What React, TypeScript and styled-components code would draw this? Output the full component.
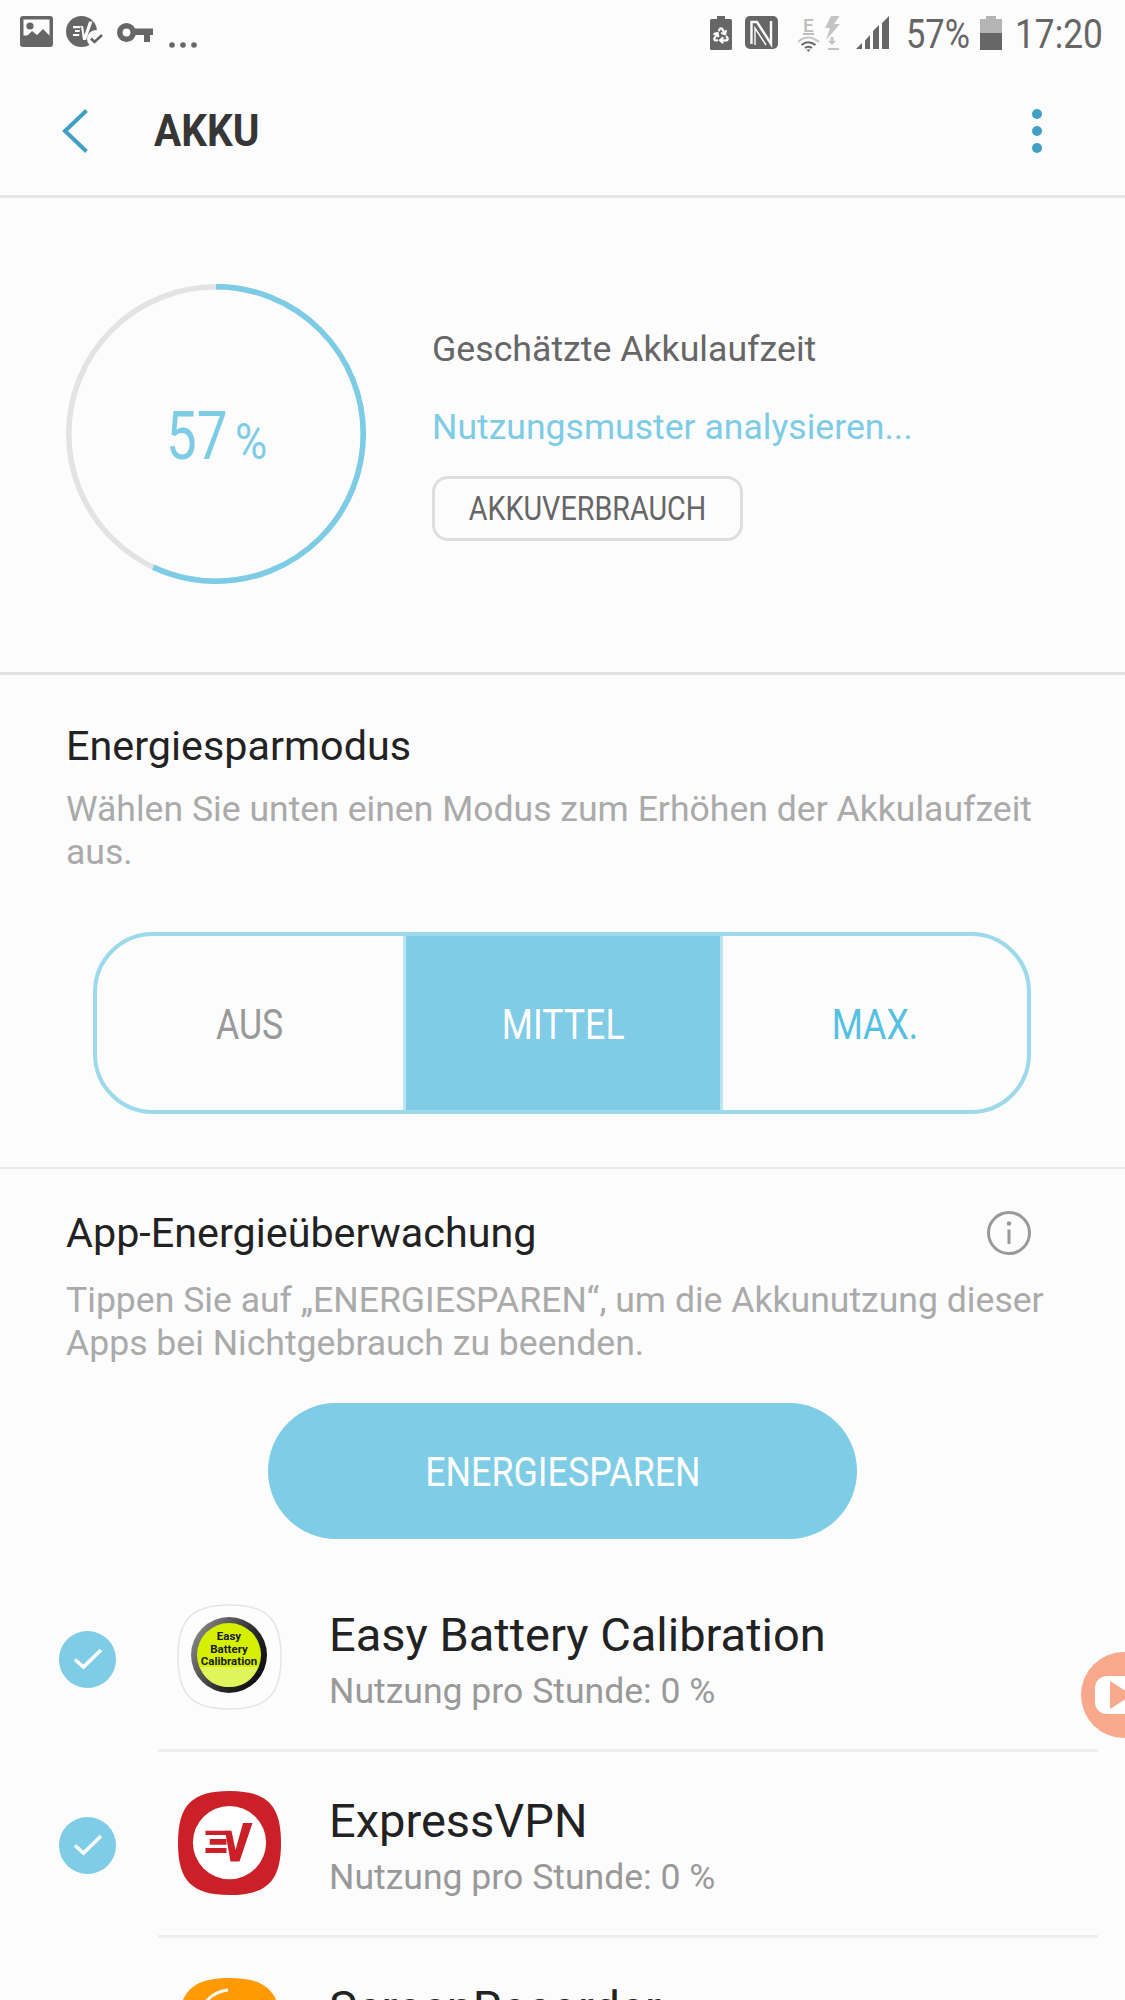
import React from "react";
import styled, { createGlobalStyle } from "styled-components";
import { Recycle } from "lucide-react";

const GlobalStyle = createGlobalStyle`
    html, body {
        margin: 0;
        padding: 0;
        background: #fcfcfc;
    }
    * {
        box-sizing: border-box;
    }
    svg {
        display: block;
    }
`;

const Page = styled.div`
    position: relative;
    width: 1125px;
    height: 2000px;
    overflow: hidden;
    background: #fcfcfc;
    font-family: Roboto, "Liberation Sans", sans-serif;
`;

/* the phone font is narrower than Roboto, so text gets squeezed */
const Narrow = styled.span<{ $x: number; $origin?: string }>`
    display: inline-block;
    white-space: nowrap;
    transform: scaleX(${(p) => p.$x});
    transform-origin: ${(p) => p.$origin ?? "left center"};
`;

const StatusBar = styled.div`
    height: 65px;
    display: flex;
    align-items: flex-start;
    justify-content: space-between;
    padding: 16px 23px 0 20px;
`;

const StatusGroup = styled.div`
    display: flex;
    align-items: flex-start;
`;

const StatusSlot = styled.div<{ $w: number; $ml?: number; $mt?: number }>`
    width: ${(p) => p.$w}px;
    margin-left: ${(p) => p.$ml ?? 0}px;
    margin-top: ${(p) => p.$mt ?? 0}px;
    display: flex;
    flex: none;
`;

const StatusText = styled.div`
    font-size: 41px;
    line-height: 36px;
    color: #666;
`;

const Header = styled.header`
    height: 133px;
    display: flex;
    align-items: center;
    padding: 2px 0 0 62px;
    border-bottom: 3px solid #e6e6e6;
`;

const HeaderTitle = styled.h1`
    margin: 0 0 0 66px;
    flex: 1;
    font-size: 45px;
    line-height: 50px;
    font-weight: 700;
    color: #363636;
`;

const MenuDots = styled.div`
    width: 10px;
    margin-right: 83px;
    display: flex;
    flex-direction: column;
    gap: 7px;
`;

const MenuDot = styled.span`
    width: 10px;
    height: 10px;
    border-radius: 50%;
    background: #3fa0c4;
`;

const BatterySection = styled.section`
    height: 477px;
    display: flex;
    align-items: flex-start;
    padding: 86px 0 0 66px;
    border-bottom: 3px solid #e2e2e2;
`;

const Gauge = styled.div`
    position: relative;
    width: 300px;
    height: 300px;
    flex: none;
    display: flex;
    align-items: center;
    justify-content: center;
    color: #7dcce6;
`;

const GaugeRing = styled.svg`
    position: absolute;
    inset: 0;
`;

const GaugeValue = styled.div`
    display: flex;
    align-items: baseline;
    justify-content: center;
    width: 110px;
    margin-left: 10px;
    padding-top: 5px;
`;

const GaugeNumber = styled.span`
    font-size: 66px;
    line-height: 66px;
    width: 69px;
`;

const GaugeUnit = styled.span`
    font-size: 50px;
    line-height: 50px;
    width: 41px;
`;

const BatteryInfo = styled.div`
    margin-left: 66px;
    display: flex;
    flex-direction: column;
    align-items: flex-start;
`;

const EstimateLabel = styled.div`
    margin-top: 43px;
    font-size: 35.7px;
    line-height: 44px;
    color: #666;
`;

const EstimateValue = styled.div`
    margin-top: 34px;
    font-size: 35.6px;
    line-height: 44px;
    color: #7dcce6;
`;

const UsageButton = styled.button`
    margin-top: 27px;
    width: 311px;
    height: 65px;
    padding: 0;
    border: 3px solid #dedede;
    border-radius: 16px;
    background: transparent;
    font-family: inherit;
    font-size: 33px;
    color: #666;
    display: flex;
    align-items: center;
    justify-content: center;
`;

const ModeSection = styled.section`
    padding: 49px 0 53px 66px;
    border-bottom: 2px solid #e8e8e8;
`;

const SectionTitle = styled.h2`
    margin: 0;
    font-size: 41.3px;
    line-height: 44px;
    font-weight: 400;
    color: #222;
`;

const SectionText = styled.p<{ $mt: number }>`
    margin: ${(p) => p.$mt}px 0 0;
    width: 1000px;
    font-size: 35.6px;
    line-height: 42.5px;
    color: #aaa;
`;

const ModeSwitch = styled.div`
    margin: 59px 0 0 27px;
    width: 938px;
    height: 182px;
    display: grid;
    grid-template-columns: 306px 320px 304px;
    border: 4px solid #9cd9ea;
    border-radius: 60px;
    overflow: hidden;
`;

const ModeOption = styled.div<{ $active?: boolean; $color: string }>`
    display: flex;
    align-items: center;
    justify-content: center;
    font-size: 42px;
    padding-top: 3px;
    color: ${(p) => p.$color};
    background: ${(p) => (p.$active ? "#80cbe5" : "transparent")};
    border-left: ${(p) => (p.$active ? "3px solid #bde5f1" : "0")};
    border-right: ${(p) => (p.$active ? "3px solid #bde5f1" : "0")};
`;

const MonitorSection = styled.section`
    padding-top: 42px;
`;

const MonitorHead = styled.div`
    display: flex;
    align-items: center;
    justify-content: space-between;
    padding: 0 94px 0 66px;
`;

const MonitorText = styled(SectionText)`
    margin-left: 66px;
`;

const SaveButton = styled.button`
    display: flex;
    align-items: center;
    justify-content: center;
    margin: 39px 0 0 268px;
    width: 589px;
    height: 136px;
    padding: 2px 0 0;
    border: 0;
    border-radius: 68px;
    background: #7ecce5;
    color: #fff;
    font-family: inherit;
    font-size: 40px;
`;

const AppList = styled.ul`
    list-style: none;
    margin: 27px 0 0;
    padding: 0;
`;

const AppRow = styled.li`
    height: 186px;
    display: flex;
    align-items: center;
    padding: 0 27px 0 59px;
`;

const CheckBadge = styled.span`
    width: 57px;
    height: 57px;
    flex: none;
    border-radius: 50%;
    background: #7ecce5;
    display: flex;
    align-items: center;
    justify-content: center;
`;

const RowBody = styled.div<{ $last?: boolean }>`
    flex: 1;
    height: 100%;
    margin-left: 42px;
    padding-left: 19px;
    display: flex;
    align-items: center;
    border-bottom: ${(p) => (p.$last ? "0" : "3px solid #eee")};
`;

const AppIcon = styled.svg`
    width: 105px;
    height: 106px;
    flex: none;
    margin-bottom: 2px;
`;

const AppText = styled.div`
    margin-left: 47px;
    padding-top: 3px;
    display: flex;
    flex-direction: column;
`;

const AppName = styled.div`
    font-size: 47px;
    line-height: 54px;
    color: #222;
`;

const AppUsage = styled.div`
    margin-top: 9px;
    font-size: 35.6px;
    line-height: 40px;
    color: #999;
`;

/* floating screen recorder bubble, sits on top of the list */
const RecorderBubble = styled.div`
    position: absolute;
    left: 1081px;
    top: 1652px;
    width: 86px;
    height: 86px;
    border-radius: 50%;
    background: #f8a98c;
    display: flex;
    align-items: center;
    padding-left: 14px;
`;

const BubbleInner = styled.div`
    width: 60px;
    height: 38px;
    border-radius: 12px;
    background: #fff;
    display: flex;
    align-items: center;
    padding-left: 15px;
`;

const BubblePlay = styled.span`
    width: 0;
    height: 0;
    border-top: 14px solid transparent;
    border-bottom: 14px solid transparent;
    border-left: 22px solid #f8a98c;
`;

const squircle = "M52.5 1C90 1 104 15 104 53C104 91 90 105 52.5 105C15 105 1 91 1 53C1 15 15 1 52.5 1Z";

const ImageIcon = () => (
    <svg width="33" height="32" viewBox="0 0 33 32">
        <rect x="0" y="0" width="33" height="31" rx="3" fill="#666" />
        <rect x="3.5" y="3.5" width="26" height="16" fill="#fcfcfc" />
        <circle cx="10" cy="10" r="3.6" fill="#666" />
        <path d="M3 24L12 15L17 19L23 13L30 20V24Z" fill="#666" />
    </svg>
);

const VpnIcon = () => (
    <svg width="39" height="32" viewBox="0 0 39 32">
        <circle cx="15.5" cy="15.5" r="15.5" fill="#666" />
        <path d="M7 10H15L14 12.2H7ZM9 14H14L13.5 16H9ZM7 18H13.5L13 20H7Z" fill="#fcfcfc" />
        <path d="M15 10H17L18.5 19L23 5.5H26.5L20 24H17Z" fill="#fcfcfc" />
        <circle cx="30" cy="23" r="9" fill="#fcfcfc" />
        <path d="M25 22.5L28.5 26L36 19" fill="none" stroke="#666" strokeWidth="2.6" />
    </svg>
);

const KeyIcon = () => (
    <svg width="36" height="22" viewBox="0 0 36 22">
        <circle cx="9.5" cy="10.5" r="6.7" fill="none" stroke="#666" strokeWidth="5.6" />
        <path d="M16 6.5H36V13H33V20H27V13H16Z" fill="#666" />
    </svg>
);

const MoreDots = () => (
    <svg width="28" height="8" viewBox="0 0 28 8">
        <circle cx="3" cy="4" r="2.8" fill="#666" />
        <circle cx="14" cy="4" r="2.8" fill="#666" />
        <circle cx="25" cy="4" r="2.8" fill="#666" />
    </svg>
);

const RecycleBatteryIcon = () => (
    <svg width="22" height="34" viewBox="0 0 22 34">
        <path d="M7 0H15V3H20.5Q22 3 22 4.5V32.5Q22 34 20.5 34H1.5Q0 34 0 32.5V4.5Q0 3 1.5 3H7Z" fill="#666" />
        <Recycle x={2} y={10} width={18} height={18} color="#fcfcfc" strokeWidth={3} />
    </svg>
);

const NfcIcon = () => (
    <svg width="33" height="34" viewBox="0 0 33 34">
        <rect x="0" y="0" width="33" height="33" rx="5" fill="#666" />
        <path d="M6.5 28V6H12L26 28V5" fill="none" stroke="#fcfcfc" strokeWidth="2.4" />
        <path d="M10 29V12L21 29" fill="none" stroke="#fcfcfc" strokeWidth="1.4" />
    </svg>
);

const WifiBoltIcon = () => (
    <svg width="43" height="36" viewBox="0 0 43 36">
        <text x="5" y="16" fontFamily="Roboto, sans-serif" fontSize="19" fontWeight="500" fill="#bcbcbc">E</text>
        <rect x="5" y="17" width="11" height="2" fill="#bcbcbc" />
        <path d="M0 26Q10 17 21 26" fill="none" stroke="#c4c4c4" strokeWidth="2" />
        <path d="M3.5 29Q10 23.5 17.5 29" fill="none" stroke="#666" strokeWidth="2" />
        <path d="M7 32Q10 29.5 14 32" fill="none" stroke="#666" strokeWidth="2" />
        <path d="M8.5 33.5L10.5 36L12.5 33.5Z" fill="#666" />
        <path d="M33 0L41.5 0L36 8H42L28 24L32 12H27Z" fill="#c4c4c4" />
        <path d="M32.5 21H35.5V25H38L34 29L30 25H32.5Z" fill="#c4c4c4" />
        <rect x="30" y="32" width="11" height="2" fill="#c4c4c4" />
    </svg>
);

const SignalIcon = () => (
    <svg width="34" height="34" viewBox="0 0 34 34">
        <path d="M0 33L6 27V33Z" fill="#666" />
        <path d="M9 24.5L14 19V33H9Z" fill="#666" />
        <path d="M17 15L23 9V33H17Z" fill="#666" />
        <path d="M26 7L33 0V33H26Z" fill="#666" />
    </svg>
);

const BatteryIcon = () => (
    <svg width="22" height="36" viewBox="0 0 22 36">
        <path d="M6 0H16V3H22V17H0V3H6Z" fill="#b4b4b4" />
        <rect x="0" y="17" width="22" height="17" fill="#666" />
    </svg>
);

const BackIcon = () => (
    <svg width="26" height="44" viewBox="0 0 26 44" fill="none">
        <path d="M24.5 1.5L3 22L24.5 42.5" stroke="#3fa0c4" strokeWidth="4" />
    </svg>
);

const InfoIcon = () => (
    <svg width="44" height="44" viewBox="0 0 44 44" fill="none">
        <circle cx="22" cy="22" r="20.5" stroke="#999" strokeWidth="3" />
        <circle cx="22" cy="12.5" r="2.2" fill="#999" />
        <path d="M22 18.5V33" stroke="#999" strokeWidth="3" />
    </svg>
);

const CheckMark = () => (
    <svg width="30" height="26" viewBox="0 0 30 26" fill="none">
        <path d="M2 13.5L10.5 21L28 4" stroke="#fff" strokeWidth="3.6" />
    </svg>
);

const BatteryCalibrationIcon = () => (
    <AppIcon viewBox="0 0 105 106">
        <defs>
            <linearGradient id="ringShade" x1="0" y1="0" x2="1" y2="0.6">
                <stop offset="0" stopColor="#9a9a9a" />
                <stop offset="0.7" stopColor="#2a2a2a" />
                <stop offset="1" stopColor="#111" />
            </linearGradient>
        </defs>
        <path d={squircle} fill="#fdfdfd" stroke="#e4e4e4" strokeWidth="1.5" />
        <circle cx="52" cy="51" r="38" fill="url(#ringShade)" />
        <circle cx="52" cy="51" r="32" fill="#d4f000" />
        <path d="M23 63H81Q73 83 52 83Q31 83 23 63Z" fill="#e0f55c" />
        <g fontFamily="Roboto, sans-serif" fontSize="11.5" fontWeight="700" fill="#1a1a1a" textAnchor="middle">
            <text x="52" y="36">Easy</text>
            <text x="52" y="49">Battery</text>
            <text x="52" y="61">Calibration</text>
        </g>
    </AppIcon>
);

const ExpressVpnIcon = () => (
    <AppIcon viewBox="0 0 105 106">
        <path d={squircle} fill="#cb2027" />
        <circle cx="52.5" cy="52.6" r="36.6" fill="#fff" />
        <path d="M28.5 40.7H52.5V45H28.5ZM32.7 49H49.5V54.7H32.7ZM28.5 58H49.5V63H28.5Z" fill="#cb2027" />
        <path d="M48 40.7H54.5L58.5 60L66 33H75.5L62.5 71.5H53.5Z" fill="#cb2027" />
    </AppIcon>
);

const RecorderIcon = () => (
    <AppIcon viewBox="0 0 105 106">
        <path d={squircle} fill="#ff9a05" />
        <path d="M22 35Q32 15 51 13" fill="none" stroke="#fff" strokeWidth="3" />
    </AppIcon>
);

const apps = [
    { name: "Easy Battery Calibration", icon: <BatteryCalibrationIcon /> },
    { name: "ExpressVPN", icon: <ExpressVpnIcon /> },
    { name: "ScreenRecorder", icon: <RecorderIcon /> },
];

export default function App() {
    return (
        <Page>
            <GlobalStyle />
            <StatusBar>
                <StatusGroup>
                    <StatusSlot $w={33}><ImageIcon /></StatusSlot>
                    <StatusSlot $w={39} $ml={13}><VpnIcon /></StatusSlot>
                    <StatusSlot $w={36} $ml={12} $mt={6}><KeyIcon /></StatusSlot>
                    <StatusSlot $w={28} $ml={16} $mt={25}><MoreDots /></StatusSlot>
                </StatusGroup>
                <StatusGroup>
                    <StatusSlot $w={22}><RecycleBatteryIcon /></StatusSlot>
                    <StatusSlot $w={33} $ml={13}><NfcIcon /></StatusSlot>
                    <StatusSlot $w={43} $ml={20}><WifiBoltIcon /></StatusSlot>
                    <StatusSlot $w={34} $ml={15}><SignalIcon /></StatusSlot>
                    <StatusSlot $w={63} $ml={16}>
                        <StatusText><Narrow $x={0.84}>57%</Narrow></StatusText>
                    </StatusSlot>
                    <StatusSlot $w={22} $ml={11}><BatteryIcon /></StatusSlot>
                    <StatusSlot $w={87} $ml={13}>
                        <StatusText><Narrow $x={0.86}>17:20</Narrow></StatusText>
                    </StatusSlot>
                </StatusGroup>
            </StatusBar>

            <Header>
                <BackIcon />
                <HeaderTitle><Narrow $x={0.9}>AKKU</Narrow></HeaderTitle>
                <MenuDots>
                    <MenuDot />
                    <MenuDot />
                    <MenuDot />
                </MenuDots>
            </Header>

            <BatterySection>
                <Gauge>
                    <GaugeRing width="300" height="300" viewBox="0 0 300 300" fill="none">
                        <circle cx="150" cy="150" r="147.25" stroke="#e1e3e4" strokeWidth="5.5" />
                        <circle
                            cx="150"
                            cy="150"
                            r="147.25"
                            stroke="#7dcce6"
                            strokeWidth="5.5"
                            pathLength={100}
                            strokeDasharray="57 43"
                            transform="rotate(-90 150 150)"
                        />
                    </GaugeRing>
                    <GaugeValue>
                        <GaugeNumber><Narrow $x={0.83}>57</Narrow></GaugeNumber>
                        <GaugeUnit><Narrow $x={0.88}>%</Narrow></GaugeUnit>
                    </GaugeValue>
                </Gauge>
                <BatteryInfo>
                    <EstimateLabel>Geschätzte Akkulaufzeit</EstimateLabel>
                    <EstimateValue>Nutzungsmuster analysieren...</EstimateValue>
                    <UsageButton><Narrow $x={0.87} $origin="center">AKKUVERBRAUCH</Narrow></UsageButton>
                </BatteryInfo>
            </BatterySection>

            <ModeSection>
                <SectionTitle>Energiesparmodus</SectionTitle>
                <SectionText $mt={20}>
                    Wählen Sie unten einen Modus zum Erhöhen der Akkulaufzeit aus.
                </SectionText>
                <ModeSwitch>
                    <ModeOption $color="#999"><Narrow $x={0.85} $origin="center">AUS</Narrow></ModeOption>
                    <ModeOption $active $color="#fff"><Narrow $x={0.85} $origin="center">MITTEL</Narrow></ModeOption>
                    <ModeOption $color="#55c1e2"><Narrow $x={0.85} $origin="center">MAX.</Narrow></ModeOption>
                </ModeSwitch>
            </ModeSection>

            <MonitorSection>
                <MonitorHead>
                    <SectionTitle>App-Energieüberwachung</SectionTitle>
                    <InfoIcon />
                </MonitorHead>
                <MonitorText $mt={24}>
                    Tippen Sie auf „ENERGIESPAREN“, um die Akkunutzung dieser Apps bei Nichtgebrauch zu beenden.
                </MonitorText>
                <SaveButton><Narrow $x={0.895} $origin="center">ENERGIESPAREN</Narrow></SaveButton>
                <AppList>
                    {apps.map((app, i) => (
                        <AppRow key={app.name}>
                            <CheckBadge><CheckMark /></CheckBadge>
                            <RowBody $last={i === apps.length - 1}>
                                {app.icon}
                                <AppText>
                                    <AppName>{app.name}</AppName>
                                    <AppUsage>Nutzung pro Stunde: 0 %</AppUsage>
                                </AppText>
                            </RowBody>
                        </AppRow>
                    ))}
                </AppList>
            </MonitorSection>

            <RecorderBubble>
                <BubbleInner><BubblePlay /></BubbleInner>
            </RecorderBubble>
        </Page>
    );
}
